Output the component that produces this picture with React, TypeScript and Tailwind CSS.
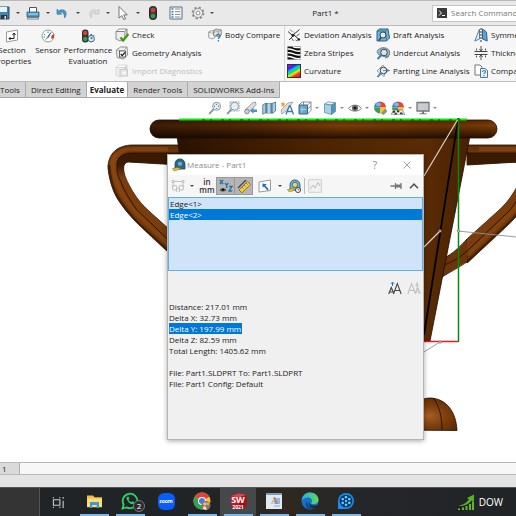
import type { ReactNode } from "react";

interface SvgProps {
  children: ReactNode;
  className?: string;
  box?: string;
}

const Svg = ({ children, className = "size-[14px]", box = "0 0 14 14" }: SvgProps) => (
  <svg viewBox={box} className={`shrink-0 ${className}`} fill="none" aria-hidden="true">
    {children}
  </svg>
);

const Caret = ({ className = "w-[14px]" }: { className?: string }) => (
  <span className={`flex shrink-0 justify-center ${className}`}>
    <Svg className="h-[2px] w-[4px]" box="0 0 4 2">
      <path d="M0 0h4L2 2z" fill="#444" />
    </Svg>
  </span>
);

/* ---------- title bar icons ---------- */

const SaveIcon = () => (
  <Svg>
    <path d="M1 1h12v12H3l-2-2z" fill="#3f86b5" stroke="#2b4c66" />
    <path d="M4 1h7v5H4z" fill="#e8f1f7" />
    <path d="M5 9h6v4H5z" fill="#333" />
    <path d="M8.500 10h1.500v3H8.500z" fill="#ddd" />
  </Svg>
);

const PrintIcon = () => (
  <Svg>
    <path d="M3.500 6V1.500h7V6" fill="#fff" stroke="#555" />
    <path d="M1 6h12v5H1z" fill="#4a9cc9" stroke="#235a80" strokeWidth=".8" />
    <path d="M2 11.500h10l.6 1.500H1.400z" fill="#fff" stroke="#555" strokeWidth=".7" />
    <path d="M2 8h10" stroke="#b9dff2" />
  </Svg>
);

const UndoIcon = ({ off = false }: { off?: boolean }) => (
  <Svg>
    <path
      d={
        off
          ? "M13 3.200v5H8.300l1.700-1.700C7.500 5.300 5.500 7 5.500 12 1.500 7 5 1.500 11.300 4.800z"
          : "M1 3.200v5h4.700L4 6.500C6.500 5.300 8.500 7 8.500 12c4-5 .5-10.500-5.800-7.200z"
      }
      fill={off ? "#dcdcdc" : "#4a9ccc"}
      stroke={off ? "#bdbdbd" : "#2a6b97"}
      strokeWidth=".6"
    />
  </Svg>
);

const CursorIcon = () => (
  <Svg>
    <path d="M3 .5v11.500l2.800-2.400L7.700 13.500l1.900-.8-1.900-3.800h3.600z" fill="#fff" stroke="#555" strokeWidth=".8" />
  </Svg>
);

const TrafficIcon = () => (
  <Svg>
    <rect x="3.500" y=".5" width="7" height="13" rx="3" fill="#3c3c3c" stroke="#222" />
    <circle cx="7" cy="4" r="2.300" fill="#d93b32" />
    <circle cx="7" cy="10" r="2.300" fill="#2f9e4f" />
  </Svg>
);

const OptionsIcon = () => (
  <Svg>
    <path d="M1 1h12v12H1z" fill="#fff" stroke="#4c6f8c" />
    <path d="M2.500 3h2M2.500 5.700h2M2.500 8.400h2M2.500 11h2" stroke="#2f7db3" strokeWidth="1.500" />
    <path d="M6 3h5.500M6 5.700h5.500M6 8.400h5.500M6 11h5.500" stroke="#888" />
  </Svg>
);

const GearIcon = () => (
  <Svg>
    <circle cx="7" cy="7" r="5.500" stroke="#888" strokeWidth="1.800" strokeDasharray="2.200 2.120" />
    <circle cx="7" cy="7" r="4.500" fill="#eee" stroke="#888" strokeWidth=".8" />
    <circle cx="7" cy="7" r="1.900" fill="#fff" stroke="#777" strokeWidth=".8" />
  </Svg>
);

/* ---------- ribbon icons ---------- */

const SectionIcon = () => (
  <Svg>
    <path d="M1.500 3L12.500 1v10l-11 2z" fill="#fff" stroke="#999" />
    <path d="M4 9.500h5V4.500M7.500 6L9 4l1.500 2M5.500 8L4 9.500 5.500 11" stroke="#222" />
  </Svg>
);

const SensorIcon = () => (
  <Svg>
    <circle cx="7" cy="7" r="6" fill="#fff" stroke="#999" />
    <path d="M3 5l1.200.8M7 2.500V4M2.500 8H4M11.500 8H10" stroke="#2f7db3" />
    <path d="M3.500 11.500L10.500 3 7.800 8.500z" fill="#3f86b5" />
    <path d="M7 7.500l3-4" stroke="#444" />
    <path d="M10.500 6.500L13 5v4l-2.500 1z" fill="#e03b2d" />
  </Svg>
);

const PerformanceIcon = () => (
  <Svg>
    <rect x="1" y=".5" width="6.500" height="13" rx="3" fill="#333" />
    <circle cx="4.200" cy="4" r="2.200" fill="#e03b32" />
    <circle cx="4.200" cy="10" r="2.200" fill="#2f9e4f" />
    <circle cx="10.200" cy="9.700" r="3.200" fill="#d9effa" stroke="#2b5f82" />
    <path d="M10.200 8v1.900l1.400-.8M9.500 5.500h1.500M12.500 6.200l.8.800" stroke="#2b5f82" />
  </Svg>
);

const CubeBase = ({ stroke = "#777" }: { stroke?: string }) => (
  <>
    <path d="M1 3.500L4 1h8l-2.500 2.500z" fill="#fff" stroke={stroke} strokeWidth=".8" strokeLinejoin="round" />
    <path d="M1 3.500h8.500v8L5 13l-4-2z" fill="#eee" stroke={stroke} strokeWidth=".8" strokeLinejoin="round" />
    <path d="M9.500 3.500L12 1v8l-2.500 2.500" fill="#d2d2d2" stroke={stroke} strokeWidth=".8" strokeLinejoin="round" />
  </>
);

const CheckIcon = () => (
  <Svg>
    <CubeBase />
    <path d="M5.500 9.500l2.700 3L13.300 6" stroke="#3d9c16" strokeWidth="2.300" />
  </Svg>
);

const GeometryIcon = () => (
  <Svg>
    <path d="M1.500 4l4-3h6.500l.5 8-4 4L2 11.500z" fill="#f1f1f1" stroke="#777" strokeWidth=".8" />
    <path d="M1.500 4L8 5l4-4M8 5l.5 8" stroke="#999" strokeWidth=".7" />
    <rect x="4.500" y="5" width="6" height="6" fill="#fff" stroke="#444" strokeWidth=".8" />
    <path d="M5.700 8l1.500 1.600L10 6.300" stroke="#111" strokeWidth="1.300" />
  </Svg>
);

const ImportIcon = () => (
  <Svg>
    <CubeBase stroke="#d2d2d2" />
    <rect x="5" y="5.500" width="7.500" height="6.500" fill="#e4e4e4" stroke="#cbcbcb" />
    <path d="M7 9h4M9 7v4" stroke="#fff" />
  </Svg>
);

const BodyCompareIcon = () => (
  <Svg>
    <path d="M.7 4l2.800-1.500L7 4v5.500L4 11 .7 9.500z" fill="#f4f4f4" stroke="#888" strokeWidth=".8" />
    <path d="M5.500 2.500L8 1l5.300 1v5l-3 1.500-4.800-1z" fill="#ddd" stroke="#777" strokeWidth=".8" />
    <path d="M5.500 2.500l4.800 1 3-1.500M10.300 3.500v5M.7 4L4 5.300 7 4" stroke="#888" strokeWidth=".7" />
    <path d="M8.500 8c0-2.300 4-2 3.700.2C12 9.500 10.400 9.300 10.400 11M10.400 12v1.500" stroke="#2f7db3" strokeWidth="1.300" />
  </Svg>
);

const DeviationIcon = () => (
  <Svg>
    <path d="M1 3.500l4.500 4 7-6M2 12l5-5 5 4.500" stroke="#333" />
    <path d="M3 1.500l2 2M6 3.500l1 1M9.500 8l3-2M4.500 10l2 3M8.500 12l2 1" stroke="#666" />
    <circle cx="6" cy="7.300" r="1.500" fill="#222" />
    <circle cx="11.800" cy="11.500" r="1.300" fill="#222" />
  </Svg>
);

const ZebraIcon = () => (
  <Svg>
    <path d="M.5.500h13v13H.5z" fill="#111" />
    <path d="M.5 3c5-1 6 3 13 2M.5 6.800c5-1 6 3 13 2M.5 10.600c5-1 6 3 13 2M6 .6c2 1.400 4 1.200 7.500.8" stroke="#fff" strokeWidth="1.500" />
  </Svg>
);

const CurvatureIcon = () => (
  <span className="size-[14px] shrink-0 border border-[#333] bg-[linear-gradient(150deg,#d000e0_4%,#3020ff_22%,#00c8f8_38%,#10e060_50%,#f0f000_62%,#ff3010_78%,#f00080_100%)]" />
);

const DraftIcon = () => (
  <Svg>
    <path d="M1 3l2.500-2H12l1.500 9-3 3H1z" fill="#6db5dc" stroke="#2b6389" />
    <path d="M1 3h8.500l1 10M9.500 3L12 1" stroke="#2b6389" strokeWidth=".8" />
    <circle cx="7" cy="7" r="3" fill="#d9edf7" stroke="#444" />
    <path d="M5 9.500L3 12.500" stroke="#444" strokeWidth="1.500" />
  </Svg>
);

const UndercutIcon = () => (
  <Svg>
    <path d="M1 6C2 1 11 0 13.500 5v4L10 11 3 9z" fill="#9fb9c8" stroke="#68808f" />
    <circle cx="8" cy="6.500" r="3.300" fill="#cfe6f3" stroke="#444" />
    <path d="M5.500 9l-4 4" stroke="#2f7db3" strokeWidth="1.800" />
    <path d="M9 12l4-1.500" stroke="#2f7db3" />
  </Svg>
);

const PartingIcon = () => (
  <Svg>
    <path d="M1 7L7 1l2 3 4.500 2.500L9 9l-1 3.500z" fill="#eee" stroke="#888" strokeWidth=".8" />
    <circle cx="7.500" cy="6.500" r="3.300" fill="#dceef7" stroke="#444" />
    <path d="M5 9l-3.500 4" stroke="#2f7db3" strokeWidth="1.800" />
    <path d="M7 6.500h6.500" stroke="#2f7db3" strokeWidth=".8" />
  </Svg>
);

const SymmetryIcon = () => (
  <Svg>
    <path d="M5.500 1v10L.8 13z" fill="#dff0f8" stroke="#52809c" />
    <path d="M8.500 1v10l4.700 2-.7-9z" fill="#5aa5cf" stroke="#2b6389" />
    <path d="M7 0v14" stroke="#333" strokeDasharray="2 1" />
  </Svg>
);

const ThicknessIcon = () => (
  <Svg>
    <path d="M.5 5.500h13M.5 8.500h13" stroke="#444" strokeWidth="1.200" />
    <path d="M7 0v4.500M7 14V9.500M5.300 3L7 5l1.700-2M5.300 11L7 9l1.700 2M2.500 2.500v2M11.500 2.500v2M2.500 9.500v2M11.500 9.500v2" stroke="#444" strokeWidth=".9" />
  </Svg>
);

const CompareIcon = () => (
  <Svg>
    <path d="M1 1h5l2 2v8H1z" fill="#fff" stroke="#777" />
    <path d="M6.500 4.500H11l2.500 2v7h-7z" fill="#e8f3f9" stroke="#55788f" />
    <path d="M8.500 8c0-2 3.300-1.800 3 0-.2 1-1.500 1-1.500 2M10 11v1.300" stroke="#2f7db3" strokeWidth="1.100" />
  </Svg>
);

/* ---------- view toolbar icons ---------- */

const ZoomFitIcon = ({ area = false }: { area?: boolean }) => (
  <Svg>
    {area && <path d="M4 .8h9.200V10H4z" stroke="#888" strokeWidth=".8" strokeDasharray="1.500 1" />}
    <circle cx="8.600" cy="5.300" r="4" fill="#e4f0f7" stroke="#8b989f" />
    {!area && <path d="M8.600 2.500l1 1.200h-2zM8.600 8.100l1-1.200h-2zM5.800 5.300l1.200-1v2zM11.400 5.300l-1.200-1v2z" fill="#376f93" />}
    <path d="M5.500 8.400L1.200 12.800" stroke="#7b98a8" strokeWidth="1.900" />
  </Svg>
);

const PreviousViewIcon = () => (
  <Svg>
    <path d="M1 9l8-7.500 2.500-.5.500 2.500L5 11z" fill="#dedede" stroke="#888" strokeWidth=".8" />
    <circle cx="3" cy="10.500" r="2.300" fill="#c7d2d8" stroke="#777" strokeWidth=".8" />
    <path d="M13 8.500H9.500V6.800L6 9.800l3.500 3V11H13z" fill="#4595c2" />
  </Svg>
);

const SectionViewIcon = () => (
  <Svg>
    <path d="M.7 4L4 2v9.500l-3.300 1.700zM10 2.500L13.500 1v9L10 12.500z" fill="#a8cfe3" stroke="#44718c" strokeWidth=".8" />
    <path d="M4 2.500h5.800V12H4z" fill="#5c97b8" stroke="#44718c" strokeWidth=".8" />
    <path d="M5.500 2.500h2.800V12H5.500z" fill="#c5d0d6" />
  </Svg>
);

const AnnotationIcon = () => (
  <Svg>
    <path d="M1 9l7-7 5-1-7 9-4 3z" fill="#ddd" stroke="#999" strokeWidth=".8" />
    <path d="M3 0l.8 2.200L6 2.500 4.300 4 4.500 6 2.800 5 .8 5.600l1-2L.5 1.800l2 .2z" fill="#f0a43c" />
    <path d="M6 13.500L9.300 5h1l3.200 8.500M7.300 10.500h5" stroke="#327fae" strokeWidth="1.300" />
  </Svg>
);

const OrientationIcon = () => (
  <Svg>
    <path d="M1 4h8.500v9H1z" fill="#62a7cd" stroke="#376680" />
    <path d="M1 4l3-3h9v8.500L9.500 13M9.500 4L13 1M5.500 1v3M9.500 8l3.500-3" stroke="#67747b" strokeWidth=".8" />
    <path d="M4 5.500v6M2.500 8.500H8" stroke="#b7daea" strokeWidth=".8" />
  </Svg>
);

const ShadedCubeIcon = () => (
  <Svg>
    <path d="M1.500 3L5 .8l7.500 1L8.500 4z" fill="#edf6fa" stroke="#53849f" strokeWidth=".7" />
    <path d="M1.500 3l7 1v9.500l-7-2z" fill="#a8d1e5" stroke="#53849f" strokeWidth=".7" />
    <path d="M8.500 4l4-2.200v8.700l-4 3z" fill="#5594b8" stroke="#53849f" strokeWidth=".7" />
  </Svg>
);

const EyeIcon = () => (
  <Svg>
    <path d="M.5 7.500C3.500 3 10.500 3 13.500 7.500 10.500 11 3.500 11 .5 7.500z" fill="#f2f2f2" stroke="#888" />
    <circle cx="7" cy="7" r="3" fill="#666" />
    <circle cx="7" cy="7" r="1.300" fill="#111" />
  </Svg>
);

const Ball = () => (
  <>
    <path d="M7 6.500V.5A6 6 0 0 0 1 6.500z" fill="#3a86d8" />
    <path d="M7 6.500V.5a6 6 0 0 1 6 6z" fill="#e3463c" />
    <path d="M7 6.500h6a6 6 0 0 1-6 6z" fill="#e9c644" />
    <path d="M7 6.500H1a6 6 0 0 0 6 6z" fill="#3f9f4c" />
    <ellipse cx="5.500" cy="3.500" rx="2.500" ry="1.700" fill="#fff" opacity=".4" />
  </>
);

const AppearanceIcon = () => (
  <Svg>
    <Ball />
    <path d="M8.500 12.500L12.500 8l1.300 2.500-3 3z" fill="#9a8e80" stroke="#666" strokeWidth=".5" />
  </Svg>
);

const SceneIcon = () => (
  <Svg>
    <Ball />
    <path d="M0 13.800L2.500 9h9l2.500 4.800z" fill="#ededed" stroke="#666" strokeWidth=".6" />
    <path d="M2.300 9.800h2.200l-.8 2H1.300zM6 9.300h2.300v2H6zM8.800 11.500h2.400l.8 1.800H9.300zM3.900 11.800h2v1.700h-2.600z" fill="#333" />
  </Svg>
);

const MonitorIcon = () => (
  <Svg>
    <path d="M1 1.500h12v8.500H1z" fill="#c9cdd0" stroke="#777" strokeWidth="1.300" />
    <path d="M6 10h2v2.300h2.500v1h-7v-1H6z" fill="#777" />
  </Svg>
);

/* ---------- measure dialog icons ---------- */

const TapeIcon = ({ clock = false }: { clock?: boolean }) => (
  <Svg>
    <path d="M3 6c0-7 10-6.500 10 0v5H3z" fill={clock ? "#68b6db" : "#33647e"} stroke="#234a60" strokeWidth=".8" />
    <circle cx="8" cy="5.800" r="2.600" fill={clock ? "#f3d65a" : "#5bb4da"} stroke="#24506b" strokeWidth=".7" />
    <path d="M.5 10.500L6 9.500l3 1.500-7 1.800z" fill="#f0c52b" stroke="#8c6e18" strokeWidth=".6" />
    {clock && <circle cx="11" cy="11" r="2.500" fill="#fff" stroke="#444" />}
    {clock && <path d="M11 9.500V11h1.300" stroke="#444" strokeWidth=".7" />}
  </Svg>
);

const ArcIcon = () => (
  <Svg>
    <path d="M1 1.500h2v2H1zM11 1.500h2v2h-2zM3 2.500h8M2 4v4M12 4v4M5.700 9v4M8.300 9v4" stroke="#c0c0c0" />
    <circle cx="3.700" cy="8.800" r="2.400" stroke="#b8b8b8" />
    <circle cx="10.300" cy="8.800" r="2.400" stroke="#b8b8b8" />
  </Svg>
);

const XyzIcon = () => (
  <Svg>
    <path d="M.8 1l3.400 4M4.200 1L.8 5M6 4l1.700 2.200L9.300 4M7.700 6.200V9M10 7.500h3L10 12h3.200" stroke="#2473a6" strokeWidth="1.300" />
    <path d="M.5 11c1.800-2.500 5.200-2.500 7 0-1.800 2-5.200 2-7 0z" fill="#555" />
    <circle cx="4" cy="10.800" r="1.200" fill="#111" />
  </Svg>
);

const RulerIcon = () => (
  <Svg>
    <path d="M1 9L9 1" stroke="#444" strokeWidth="1.200" />
    <path d="M2 11l8.500-8.500 3 3L5 13.800z" fill="#f4cc3f" stroke="#7d6420" strokeWidth=".8" />
    <path d="M5 8l1.500 1.500M7 6l1.500 1.500M9 4l1.500 1.500" stroke="#7d6420" strokeWidth=".8" />
  </Svg>
);

const ProjectIcon = () => (
  <Svg>
    <path d="M1 3l11.500-2v10.500L1 13z" fill="#fff" stroke="#999" />
    <path d="M4.500 4.500v4.300l1.400-1.300 3.600 4 1.300-1.200-3.700-3.800 1.700-1.300z" fill="#216fa5" />
  </Svg>
);

const GraphIcon = () => (
  <Svg>
    <path d="M.7.700h12.600v12.600H.7z" fill="#f1f1f1" stroke="#cfcfcf" />
    <path d="M2 10l3-4 2 3 3-5.500L12 7" stroke="#bdbdbd" />
  </Svg>
);

const PinIcon = () => (
  <Svg>
    <path d="M1.500 7h4.500M6.500 4v6M12 4v6" stroke="#777" strokeWidth="1.300" />
    <path d="M7 5.500h5v3H7z" fill="#777" />
  </Svg>
);

/* ---------- taskbar icons ---------- */

const TaskViewIcon = () => (
  <Svg className="size-[13px]">
    <path d="M1.500 4h7v6h-7zM1.500 2.500V1M8.500 2.500V1M1.500 11.500V13M8.500 11.500V13M12 1v2M12 5v8" stroke="#c9c9c9" strokeWidth="1.200" />
  </Svg>
);

const ExplorerIcon = () => (
  <Svg className="size-[17px]" box="0 0 17 17">
    <path d="M1 2.500h6l1.500 1.800H16v10H1z" fill="#f0bd3f" />
    <path d="M1 5.500h15V14H1z" fill="#fbdc7b" />
    <path d="M4 15V9h9v6h-2.300v-3H6.300v3z" fill="#3f96d8" />
  </Svg>
);

const WhatsAppIcon = () => (
  <Svg className="size-[18px]" box="0 0 18 18">
    <path d="M1.500 16.500l1.100-4A7.300 7.300 0 1 1 5.500 15.400z" stroke="#2bd366" strokeWidth="1.800" />
    <path d="M6.200 4.800c-2.200 1.600 2.500 8.300 5.800 7.300 1.400-.6 1.500-1.600 1.200-1.900l-1.900-1-1 1c-1.300-.5-2.300-1.400-2.800-2.700l.8-1-.8-1.800z" fill="#2bd366" />
  </Svg>
);

const ChromeIcon = () => (
  <Svg className="size-[18px]" box="0 0 18 18">
    <circle cx="9" cy="9" r="8.500" fill="#f4c432" />
    <path d="M9 9L1.600 4.800A8.500 8.500 0 0 1 16.400 4.800z" fill="#e04437" />
    <path d="M9 9L1.600 4.800A8.500 8.500 0 0 0 9 17.500l3-5z" fill="#2fa353" />
    <circle cx="9" cy="9" r="4" fill="#fff" />
    <circle cx="9" cy="9" r="3" fill="#3f7de8" />
    <circle cx="13" cy="13.500" r="4.500" fill="#8f7350" />
    <circle cx="11.800" cy="12" r="1.700" fill="#e2b58e" />
    <circle cx="14.700" cy="11.700" r="1.500" fill="#dcaa82" />
    <path d="M9.800 16.500c.5-3 3.400-3 4 1-1.500.7-2.700.3-4-1z" fill="#ece7df" />
  </Svg>
);

const SolidWorksIcon = () => (
  <span className="relative">
    <Svg className="size-[17px]" box="0 0 17 17">
      <path d="M1 3l8-2.500L16.500 2v11L9 15.500 1 13z" fill="#c8141d" />
      <path d="M1 3l8-2.500L16.500 2 9 4.500z" fill="#e5434a" />
      <path d="M9 4.500L16.500 2v11L9 15.500z" fill="#a60c14" />
    </Svg>
    <span className="absolute inset-x-0 top-[3px] text-center text-[9px] font-bold leading-[8px] text-white">SW</span>
    <span className="absolute inset-x-0 top-[11px] text-center text-[5px] font-bold leading-[6px] text-white">2021</span>
  </span>
);

const WordPadIcon = () => (
  <span className="relative flex size-[16px] flex-col border-t-2 border-[#7b9cbd] bg-[#dfeaf5]">
    <span className="pl-px font-['Liberation_Serif',serif] text-[10px] font-bold leading-[11px] text-[#ec8a32]">A</span>
    <Svg className="absolute left-[8px] top-[3px] h-[9px] w-[7px]" box="0 0 7 9">
      <path d="M0 1h6M0 3h6M0 5h6" stroke="#4f86c9" />
      <path d="M0 8h6" stroke="#9aa9b8" />
    </Svg>
  </span>
);

const EdgeIcon = () => (
  <Svg className="size-[18px]" box="0 0 18 18">
    <defs>
      <linearGradient id="edgeTop" x1="0" x2="1">
        <stop offset="0" stopColor="#2aa9e8" />
        <stop offset="1" stopColor="#62d957" />
      </linearGradient>
    </defs>
    <circle cx="9" cy="9" r="8.500" fill="#1673c8" />
    <path d="M.5 9C1 3 5 .5 9 .5c5 0 8.500 3.500 8.500 7.200 0 3-2.500 4.300-5 4.300-2 0-2.600-.7-2-1.600C12.500 7.500 9 5 6 5.500 3.500 6 1.300 7 .5 9z" fill="url(#edgeTop)" />
    <path d="M6.500 8.500c-1.500 4 2.500 7.500 8.500 6.500-2 2-4 2.500-6 2.500-4-1-6-6-2.500-9z" fill="#0e4a91" />
    <path d="M8 9.500c0 3 4 5 8.500 3.500l1.500 1-2 1.500C11 17 7 13.500 8 9.500z" fill="#22262a" />
  </Svg>
);

const ReelIcon = () => (
  <Svg className="size-[18px]" box="0 0 18 18">
    <path d="M1 17V9a8 8 0 1 1 8 8z" fill="#168df0" />
    <circle cx="9" cy="9" r="6.300" fill="#0b2d63" />
    {[0, 60, 120, 180, 240, 300].map((angle) => (
      <circle key={angle} cx="9" cy="5.200" r="1.400" fill="#4fd3ff" transform={`rotate(${angle} 9 9)`} />
    ))}
    <circle cx="9" cy="9" r="1.200" fill="#4fd3ff" />
  </Svg>
);

const StockIcon = () => (
  <Svg className="size-[18px]" box="0 0 18 18">
    <path d="M1 17v-1.500h2V17zM5 17v-2.500h2V17zM8.500 17v-4h2v4zM12 17v-6h2v6zM15 17V8.500h2V17z" fill="#65b32e" />
    <path d="M1 12.500c5 0 8-2.500 11-6L10 5l7-3.500V9l-2.300-1.500C11 11.500 6.500 14 1 12.500z" fill="#57b51c" />
  </Svg>
);

/* ---------- sections ---------- */

const TitleBar = () => (
  <header className="flex h-[26px] shrink-0 items-center border-b border-t border-[#b9b9b9] bg-[#e9e9e9]">
    <div className="-ml-[4px] flex items-center">
      {[
        { name: "Save", icon: <SaveIcon /> },
        { name: "Print", icon: <PrintIcon /> },
        { name: "Undo", icon: <UndoIcon /> },
        { name: "Redo", icon: <UndoIcon off /> },
        { name: "Select", icon: <CursorIcon /> },
      ].map((item) => (
        <button key={item.name} aria-label={item.name} className="flex items-center">
          {item.icon}
          <Caret className="w-[16px]" />
        </button>
      ))}
      <button aria-label="Rebuild">
        <TrafficIcon />
      </button>
      <button aria-label="File properties" className="ml-[9px]">
        <OptionsIcon />
      </button>
      <button aria-label="Options" className="ml-2 flex items-center">
        <GearIcon />
        <Caret />
      </button>
    </div>
    <h1 className="flex-1 text-center">Part1 *</h1>
    <label className="flex h-[17px] w-[84px] items-center gap-1 overflow-hidden border border-r-0 border-[#c6c6c6] bg-white pl-1">
      <span className="flex h-[10px] w-[10px] shrink-0 items-center justify-center bg-[#3b3b3b]">
        <Svg className="size-[8px]" box="0 0 8 8">
          <path d="M1 1.500L3.500 4 1 6.500M4 6.500h3" stroke="#fff" />
        </Svg>
      </span>
      <input
        aria-label="Search Commands"
        placeholder="Search Commands"
        className="w-[80px] shrink-0 outline-none placeholder:text-[#777]"
      />
    </label>
  </header>
);

interface Command {
  label: string;
  icon: ReactNode;
  off?: boolean;
}

const checks: Command[] = [
  { label: "Check", icon: <CheckIcon /> },
  { label: "Geometry Analysis", icon: <GeometryIcon /> },
  { label: "Import Diagnostics", icon: <ImportIcon />, off: true },
];
const surfaces: Command[] = [
  { label: "Deviation Analysis", icon: <DeviationIcon /> },
  { label: "Zebra Stripes", icon: <ZebraIcon /> },
  { label: "Curvature", icon: <CurvatureIcon /> },
];
const molds: Command[] = [
  { label: "Draft Analysis", icon: <DraftIcon /> },
  { label: "Undercut Analysis", icon: <UndercutIcon /> },
  { label: "Parting Line Analysis", icon: <PartingIcon /> },
];
const compares: Command[] = [
  { label: "Symmetry Check", icon: <SymmetryIcon /> },
  { label: "Thickness Analysis", icon: <ThicknessIcon /> },
  { label: "Compare Documents", icon: <CompareIcon /> },
];

const CommandColumn = ({ items, className }: { items: Command[]; className: string }) => (
  <div className={`flex shrink-0 flex-col ${className}`}>
    {items.map((item) => (
      <button
        key={item.label}
        disabled={item.off}
        className="flex h-[18px] items-center gap-[3px] whitespace-nowrap disabled:text-[#bdbdbd]"
      >
        {item.icon}
        {item.label}
      </button>
    ))}
  </div>
);

const BigCommand = ({ icon, lines, className }: { icon: ReactNode; lines: string[]; className: string }) => (
  <button className={`flex shrink-0 flex-col items-center pt-[3px] leading-[11px] ${className}`}>
    <span className="mb-px">{icon}</span>
    {lines.map((line) => (
      <span key={line}>{line}</span>
    ))}
  </button>
);

const Ribbon = () => (
  <div className="flex h-[56px] shrink-0 items-start overflow-hidden border-b border-[#bcbcbc] bg-[#f6f6f6]">
    <BigCommand icon={<SectionIcon />} lines={["Section", "Properties"]} className="-ml-[8px] w-[40px]" />
    <BigCommand icon={<SensorIcon />} lines={["Sensor"]} className="w-[32px]" />
    <BigCommand icon={<PerformanceIcon />} lines={["Performance", "Evaluation"]} className="w-[48px]" />
    <CommandColumn items={checks} className="ml-[3px] w-[93px]" />
    <CommandColumn items={[{ label: "Body Compare", icon: <BodyCompareIcon /> }]} className="w-[76px]" />
    <div className="w-px shrink-0 self-stretch bg-[#d5d5d5]" />
    <CommandColumn items={surfaces} className="ml-[2px] w-[89px]" />
    <CommandColumn items={molds} className="w-[98px]" />
    <CommandColumn items={compares} className="w-[100px]" />
  </div>
);

const tabs = ["Tools", "Direct Editing", "Evaluate", "Render Tools", "SOLIDWORKS Add-Ins"];

const Tabs = () => (
  <nav className="flex h-[16px] shrink-0">
    {tabs.map((tab) => (
      <button
        key={tab}
        className={`h-[16px] whitespace-nowrap border-b border-r border-[#a9a9a9] first:pl-0 ${
          tab === "Evaluate" ? "bg-white px-[3px] font-bold" : "bg-[#d3d3d3] px-[5px]"
        }`}
      >
        {tab}
      </button>
    ))}
  </nav>
);

const Handle = () => (
  <>
    <path
      d="M180 145H133C117 145 108 154 108 168C109 178 112 189 117 198C127 214 138 224 150 235L180 263V239L150 212C143 206 138 200 133 192C129 185 125 178 124 172C123 166 124 163 128 162L180 165z"
      fill="url(#tube)"
      stroke="#1d0d00"
      strokeWidth=".8"
    />
    <path d="M180 153H130C120 154 116 159 117 168C117 172 118 176 120 180C125 192 131 202 137 210L180 251V239L150 212C143 206 138 200 133 192C129 185 125 178 124 172C123 166 124 163 128 162L180 165z" fill="url(#tubeInner)" />
    <path d="M168 149H133C118 149 112 157 113 167C115 184 124 199 135 212L180 255" stroke="#8f4c14" strokeWidth="4" fill="none" opacity=".55" />
    <path d="M109 165C110 178 113 190 119 199C129 215 139 224 151 235L180 262" stroke="#2b1300" strokeWidth="2.500" fill="none" opacity=".6" />
    <path d="M180 153H130C120 154 116 159 117 168C117 172 118 176 120 180C125 192 131 202 137 210L180 251" stroke="#1d0d00" strokeWidth=".8" fill="none" />
  </>
);

const CupModel = () => (
  <svg viewBox="0 98 516 364" preserveAspectRatio="xMidYMin slice" className="h-full w-full" aria-label="Trophy cup model">
    <defs>
      <linearGradient id="tube" x1="0" y1="0" x2="0" y2="1">
        <stop offset="0" stopColor="#5e2c06" />
        <stop offset=".1" stopColor="#7d3f0d" />
        <stop offset="1" stopColor="#6b340a" />
      </linearGradient>
      <linearGradient id="tubeInner" x1="0" y1="0" x2="0" y2="1">
        <stop offset="0" stopColor="#3a1a02" />
        <stop offset=".12" stopColor="#3a1a02" />
        <stop offset=".25" stopColor="#7a3d0d" />
        <stop offset="1" stopColor="#7a3d0d" />
      </linearGradient>
      <linearGradient id="lip" x1="0" y1="0" x2="0" y2="1">
        <stop offset="0" stopColor="#5a2a04" />
        <stop offset=".3" stopColor="#7a3b08" />
        <stop offset=".7" stopColor="#4d2403" />
        <stop offset="1" stopColor="#241000" />
      </linearGradient>
      <linearGradient id="lipShade" x1="0" x2="1">
        <stop offset="0" stopColor="#000" stopOpacity=".5" />
        <stop offset=".3" stopColor="#000" stopOpacity=".3" />
        <stop offset=".55" stopColor="#000" stopOpacity="0" />
        <stop offset=".85" stopColor="#000" stopOpacity=".15" />
        <stop offset="1" stopColor="#000" stopOpacity="0" />
      </linearGradient>
      <linearGradient id="body" x1="0" x2="1">
        <stop offset="0" stopColor="#2a1200" />
        <stop offset=".5" stopColor="#4c2403" />
        <stop offset=".85" stopColor="#5a2b05" />
        <stop offset="1" stopColor="#482103" />
      </linearGradient>
      <radialGradient id="dome" cx=".5" cy=".55" r=".6">
        <stop offset="0" stopColor="#a85d24" />
        <stop offset=".5" stopColor="#7f400d" />
        <stop offset="1" stopColor="#5d2c05" />
      </radialGradient>
    </defs>

    <Handle />
    <g transform="matrix(-1 0 0 1 647 0)">
      <Handle />
    </g>
    {/* lower joint of the right handle */}
    <path d="M467 239C461 246 455 252 446 257L442 277C452 271 461 265 467 262z" fill="#6b340a" />
    <path d="M467 239C461 245 455 252 446 257M467 251C460 257 453 262 444 265M442 277C452 271 461 266 467 262" stroke="#1d0d00" strokeWidth=".8" fill="none" />

    {/* body and rim */}
    <path d="M177 136L181 165L250 341H430L470 136z" fill="url(#body)" stroke="#1d0d00" strokeWidth=".8" />
    <path d="M458 120L424 335" stroke="#000" strokeWidth="1.800" />
    <rect x="150" y="120" width="347" height="18" rx="9" fill="url(#lip)" />
    <rect x="150" y="120" width="347" height="18" rx="9" fill="url(#lipShade)" stroke="#1d0d00" strokeWidth=".8" />
    <path d="M458 121L455 138" stroke="#000" strokeWidth="1.500" />

    {/* base */}
    <path d="M400 430C404 408 416 398 431 398C446 399 456 411 457 430.500z" fill="url(#dome)" stroke="#1d0d00" strokeWidth=".8" />
    <path d="M433 398C439 405 442 416 442 430" stroke="#1d0d00" strokeWidth=".9" fill="none" />

    {/* measured edges and leaders */}
    <path d="M179 119.500H467" stroke="#00f000" strokeWidth="2" />
    <path d="M202 120H460" stroke="#0a4a00" strokeWidth="1" strokeDasharray="3 5 2 9" />
    <path d="M424 341.500H458" stroke="#f01818" strokeWidth="1.500" />
    <path d="M458.500 118V342" stroke="#058a0c" strokeWidth="1.500" />
    <path d="M458 119L424 176M440 231L424 247" stroke="#d8d2cc" strokeWidth="1.200" />
    <path d="M458 231L516 237M440 342L424 352" stroke="#8f9488" strokeWidth=".9" />
    <path d="M457 120l1.500-2 1.500 2" stroke="#222" fill="none" strokeWidth=".8" />
    <g fill="#c9c9c9" stroke="#666" strokeWidth=".6">
      <circle cx="440" cy="231" r="1.300" />
      <circle cx="458.500" cy="231" r="1.300" />
      <circle cx="440" cy="342" r="1.300" />
    </g>
  </svg>
);

const viewTools: { name: string; icon: ReactNode; menu?: boolean }[] = [
  { name: "Zoom to fit", icon: <ZoomFitIcon /> },
  { name: "Zoom to area", icon: <ZoomFitIcon area /> },
  { name: "Previous view", icon: <PreviousViewIcon /> },
  { name: "Section view", icon: <SectionViewIcon /> },
  { name: "Annotation views", icon: <AnnotationIcon /> },
  { name: "View orientation", icon: <OrientationIcon />, menu: true },
  { name: "Display style", icon: <ShadedCubeIcon />, menu: true },
  { name: "Hide/Show items", icon: <EyeIcon />, menu: true },
  { name: "Edit appearance", icon: <AppearanceIcon /> },
  { name: "Apply scene", icon: <SceneIcon />, menu: true },
  { name: "View settings", icon: <MonitorIcon />, menu: true },
];

const ViewToolbar = () => (
  <div className="absolute left-[208px] top-[3px] flex items-center gap-1">
    {viewTools.map((tool) => (
      <button key={tool.name} aria-label={tool.name} className="flex items-center">
        {tool.icon}
        {tool.menu && <Caret className="w-[7px] pl-[3px] opacity-60" />}
      </button>
    ))}
  </div>
);

const MeasureDialog = () => (
  <section
    role="dialog"
    aria-label="Measure - Part1"
    className="absolute left-[167px] top-[56px] flex h-[286px] w-[257px] flex-col border border-[#b5b5b5] bg-[#f0f0f0] shadow-[0_1px_5px_rgba(0,0,0,0.35)]"
  >
    <div className="flex h-[20px] shrink-0 items-center bg-white pl-1 pr-3 text-[#8c8c8c]">
      <TapeIcon />
      <h2 className="ml-px flex-1">Measure - Part1</h2>
      <button aria-label="Help" className="mr-[26px] text-[10px]">
        ?
      </button>
      <button aria-label="Close">
        <Svg className="size-[8px]" box="0 0 8 8">
          <path d="M.5.500l7 7M7.500.500l-7 7" stroke="#999" strokeWidth=".9" />
        </Svg>
      </button>
    </div>
    <div className="flex h-[22px] shrink-0 items-center bg-[#f6f6f6] pl-[3px] pr-1">
      <button aria-label="Arc/Circle measurements" className="flex items-center">
        <ArcIcon />
        <Caret className="w-[14px]" />
      </button>
      <button className="flex w-[16px] flex-col items-center font-semibold leading-[8px] text-[#333]">
        <span>in</span>
        <span>mm</span>
      </button>
      <button aria-label="Show XYZ measurements" className="ml-px flex h-[18px] w-[19px] items-center justify-center border border-[#999] bg-[#b5b5b5]">
        <XyzIcon />
      </button>
      <button aria-label="Point to point" className="flex h-[18px] w-[18px] items-center justify-center border border-l-0 border-[#999] bg-[#b5b5b5]">
        <RulerIcon />
      </button>
      <button aria-label="Projected on" className="ml-[5px] flex items-center">
        <ProjectIcon />
        <Caret className="w-[15px]" />
      </button>
      <button aria-label="Measurement history">
        <TapeIcon clock />
      </button>
      <span className="mx-[3px] h-4 w-px bg-[#bbb]" />
      <button aria-label="Create sensor" disabled>
        <GraphIcon />
      </button>
      <button aria-label="Keep visible" className="ml-auto">
        <PinIcon />
      </button>
      <button aria-label="Collapse" className="ml-[6px]">
        <Svg className="h-[6px] w-[10px]" box="0 0 10 6">
          <path d="M1 5.200L5 1.200l4 4" stroke="#555" strokeWidth="1.600" />
        </Svg>
      </button>
    </div>
    <ul className="h-[74px] shrink-0 border border-[#5fb0e2] bg-[#cfe4f8] leading-[11px]">
      <li className="pl-px">Edge&lt;1&gt;</li>
      <li className="bg-[#0078d7] pl-px text-white">Edge&lt;2&gt;</li>
    </ul>
    <div className="flex h-[30px] shrink-0 items-end justify-end gap-[5px] pb-[6px] pr-[2px]">
      <button aria-label="Increase text size">
        <Svg>
          <path d="M.7 13l2.600-6.500L6 13M1.700 11h3.300M5.500 13L9.300 2.500 13.200 13M6.900 9.500h4.800" stroke="#444" strokeWidth="1.100" />
          <path d="M4.500 5V1.500M3 2.800l1.500-1.700L6 2.800" stroke="#2277b0" />
        </Svg>
      </button>
      <button aria-label="Decrease text size" disabled>
        <Svg>
          <path d="M.8 13L4.600 2.500 8.500 13M2.200 9.500H7M8 13l2.600-6.500L13.300 13M9 11h3.300M10 1v4M8.500 3.600L10 5.200l1.500-1.600" stroke="#c0c0c0" strokeWidth="1.100" />
        </Svg>
      </button>
    </div>
    <div className="px-px leading-[11px]">
      <p>Distance: 217.01 mm</p>
      <p>Delta X: 32.73 mm</p>
      <p className="w-fit bg-[#0078d7] pr-px text-white">Delta Y: 197.99 mm</p>
      <p>Delta Z: 82.59 mm</p>
      <p>Total Length: 1405.62 mm</p>
      <p className="pt-[11px]">File: Part1.SLDPRT To: Part1.SLDPRT</p>
      <p>File: Part1 Config: Default</p>
    </div>
  </section>
);

const StatusBar = () => (
  <div className="shrink-0 border-t border-[#b9b9b9] bg-[#e4e4e4]">
    <div className="flex h-[12px] items-center border-b border-[#b9b9b9] bg-[#f7f7f7]">
      <button className="h-full w-[20px] border-r border-[#b0b0b0] bg-[#dadada] pl-[2px] text-left leading-[11px]">1</button>
    </div>
    <div className="h-[12px]" />
  </div>
);

const apps: { name: string; icon: ReactNode; open: boolean }[] = [
  { name: "File Explorer", icon: <ExplorerIcon />, open: true },
  {
    name: "WhatsApp",
    icon: (
      <span className="relative">
        <WhatsAppIcon />
        <span className="absolute left-[12px] top-[8px] size-[12px] rounded-full border border-[#777] bg-[#2b2d2e] text-center text-[8px] leading-[10px] text-white">
          2
        </span>
      </span>
    ),
    open: true,
  },
  {
    name: "Zoom",
    icon: (
      <span className="flex size-[17px] items-center justify-center rounded-[6px] bg-[#0b5cff] pb-px text-[5px] font-bold leading-[6px] text-white">
        zoom
      </span>
    ),
    open: false,
  },
  { name: "Chrome", icon: <ChromeIcon />, open: true },
  { name: "SOLIDWORKS", icon: <SolidWorksIcon />, open: true },
  { name: "WordPad", icon: <WordPadIcon />, open: true },
  { name: "Edge", icon: <EdgeIcon />, open: true },
  { name: "Video", icon: <ReelIcon />, open: true },
];

const Taskbar = () => (
  <footer className="flex h-[29px] shrink-0 border-t border-[#555] bg-[linear-gradient(90deg,#202427_40%,#302820_55%,#25262a_70%,#202426_100%)]">
    <div className="w-[40px] border-r border-[#555] bg-[#343434]" />
    <button aria-label="Task view" className="flex w-[36px] items-center justify-center">
      <TaskViewIcon />
    </button>
    {apps.map((app) => (
      <button
        key={app.name}
        aria-label={app.name}
        className={`flex w-[36px] flex-col items-center ${app.name === "SOLIDWORKS" ? "bg-[#46494b]" : ""}`}
      >
        <span className="flex flex-1 items-center">{app.icon}</span>
        <span className={`h-[2px] w-[29px] ${app.open ? "bg-[#76b9ed]" : ""}`} />
      </button>
    ))}
    <button className="ml-auto flex items-center gap-1 pr-[13px] text-[10px] text-white">
      <StockIcon />
      DOW
    </button>
  </footer>
);

const App = () => {
  return (
    <div className="flex h-screen flex-col overflow-hidden bg-white font-['Open_Sans','Noto_Sans',sans-serif] text-[8px] leading-[12px] text-[#222]">
      <TitleBar />
      <Ribbon />
      <Tabs />
      <main className="relative min-h-0 flex-1">
        <CupModel />
        <ViewToolbar />
        <MeasureDialog />
      </main>
      <StatusBar />
      <Taskbar />
    </div>
  );
};

export default App;
